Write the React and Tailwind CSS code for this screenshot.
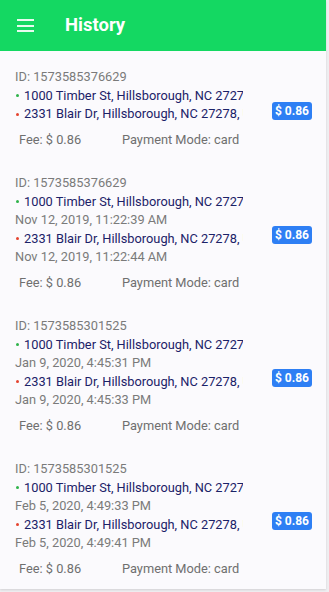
import React from 'react';

// Ride history list — four trips, each with pickup/dropoff and fare badge.
const trips = [
  {
    id: '1573585376629',
    from: '1000 Timber St, Hillsborough, NC 27278, USA',
    to: '2331 Blair Dr, Hillsborough, NC 27278, USA',
    fromTime: null,
    toTime: null,
  },
  {
    id: '1573585376629',
    from: '1000 Timber St, Hillsborough, NC 27278, USA',
    to: '2331 Blair Dr, Hillsborough, NC 27278, USA',
    fromTime: 'Nov 12, 2019, 11:22:39 AM',
    toTime: 'Nov 12, 2019, 11:22:44 AM',
  },
  {
    id: '1573585301525',
    from: '1000 Timber St, Hillsborough, NC 27278, USA',
    to: '2331 Blair Dr, Hillsborough, NC 27278, USA',
    fromTime: 'Jan 9, 2020, 4:45:31 PM',
    toTime: 'Jan 9, 2020, 4:45:33 PM',
  },
  {
    id: '1573585301525',
    from: '1000 Timber St, Hillsborough, NC 27278, USA',
    to: '2331 Blair Dr, Hillsborough, NC 27278, USA',
    fromTime: 'Feb 5, 2020, 4:49:33 PM',
    toTime: 'Feb 5, 2020, 4:49:41 PM',
  },
];

function Address({ color, text }) {
  return (
    <div className="flex items-center h-[18.5px] overflow-hidden whitespace-nowrap">
      <span className={`inline-block w-[3px] h-[3px] rounded-full ml-[1px] mr-[5px] shrink-0 ${color}`} />
      <span className="text-[#1b2268]">{text}</span>
    </div>
  );
}

function TripCard({ trip }) {
  return (
    <div className="flex items-center pl-[15px] pt-[17px] pb-[8px]">
      <div className="w-[228px] text-[12.8px] leading-[18.5px]">
        <div className="text-[#7a7a7a]">ID: {trip.id}</div>
        <Address color="bg-[#2fb34a]" text={trip.from} />
        {trip.fromTime && <div className="text-[#7a7a7a]">{trip.fromTime}</div>}
        <Address color="bg-[#e5432f]" text={trip.to} />
        {trip.toTime && <div className="text-[#7a7a7a]">{trip.toTime}</div>}
        <div className="flex mt-[7px] pl-[4px] text-[#6f6f6f]">
          <span className="w-[103px]">Fee: $ 0.86</span>
          <span>Payment Mode: card</span>
        </div>
      </div>
      <div className="ml-[29px] mt-[4px] h-[18px] w-[40px] rounded-[3px] bg-[#2e7ff4] text-white text-[12px] font-bold flex items-center justify-center">
        $ 0.86
      </div>
    </div>
  );
}

export default function App() {
  return (
    <div
      className="w-[329px] h-[592px] bg-[#efeef1] overflow-hidden"
      style={{ fontFamily: 'Roboto, "Liberation Sans", sans-serif' }}
    >
      <div className="w-[326px] pb-[3px] bg-[#fbfafd] shadow-[0_1px_2px_rgba(0,0,0,0.12)]">
        {/* Header */}
        <div className="h-[51px] bg-[#14d862] flex items-center pl-[17px]">
          <div className="flex flex-col gap-[3.5px] w-[17px]">
            <span className="h-[2px] bg-white/90" />
            <span className="h-[2px] bg-white/90" />
            <span className="h-[2px] bg-white/90" />
          </div>
          <span className="ml-[31px] text-white font-bold text-[18.5px]">History</span>
        </div>

        {/* Trip list */}
        <div>
          {trips.map((t, i) => (
            <TripCard key={i} trip={t} />
          ))}
        </div>
      </div>
    </div>
  );
}
